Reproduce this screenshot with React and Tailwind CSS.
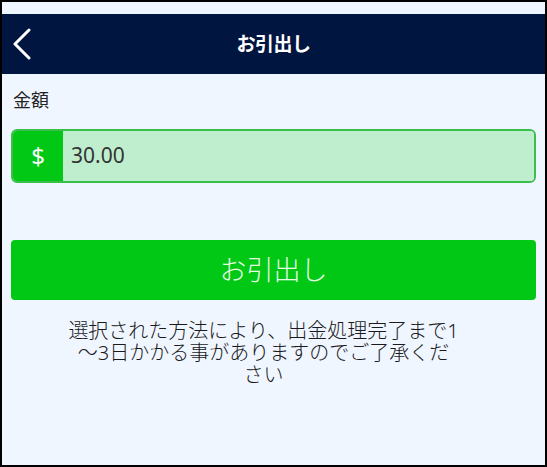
export default function App() {
  return (
    <div
      className="w-[547px] h-[467px] border-2 border-black bg-[#f0f6ff] pt-3 flex flex-col"
      style={{ fontFamily: '"Noto Sans", "Noto Sans CJK JP", sans-serif' }}
    >
      {/* Header */}
      <div className="relative h-[60px] bg-[#001540] flex items-center justify-center">
        <button className="absolute left-[10px] top-[14px] text-white">
          <svg width="20" height="32" viewBox="0 0 20 32" fill="none">
            <polyline points="17,2 3,16 17,30" stroke="currentColor" strokeWidth="3" strokeLinecap="round" strokeLinejoin="round" />
          </svg>
        </button>
        <span className="text-white font-bold text-[19px] tracking-tight">お引出し</span>
      </div>

      <div className="px-[9px]">
        {/* Amount label */}
        <p className="mt-[14px] ml-[2px] text-[18px] leading-[24px] text-[#222]">金額</p>

        {/* Amount input */}
        <div className="mt-[17px] flex h-[54px] rounded-[6px] border-2 border-[#3cbf4a] overflow-hidden">
          <div className="w-[50px] bg-[#00c814] flex items-center justify-center text-white text-[24px]">$</div>
          <div className="flex-1 bg-[#bfeecf] flex items-center pl-[8px] text-[21px] text-[#333]">30.00</div>
        </div>

        {/* Submit */}
        <button className="mt-[57px] w-full h-[60px] rounded-[4px] bg-[#00c814] text-[#e4fde4] text-[27px] font-light">
          お引出し
        </button>

        {/* Notice */}
        <div className="mt-[20px] mr-[20px] text-center text-[20px] leading-[22px] text-[#1a1a1a] font-light">
          <span className="block whitespace-nowrap">選択された方法により、出金処理完了まで1</span>
          <span className="block whitespace-nowrap">～3日かかる事がありますのでご了承くだ</span>
          <span className="block whitespace-nowrap">さい</span>
        </div>
      </div>
    </div>
  )
}
